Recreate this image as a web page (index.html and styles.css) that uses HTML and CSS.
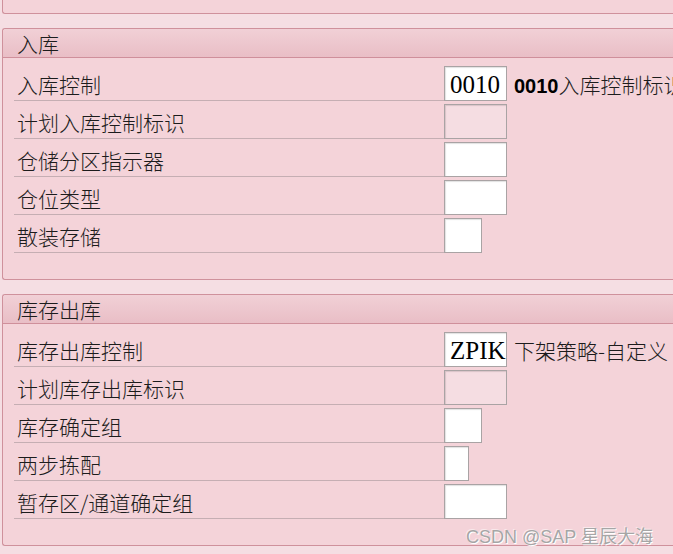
FILE: index.html
```html
<!DOCTYPE html>
<html lang="zh">
<head>
<meta charset="utf-8">
<title>入库 / 库存出库</title>
<link rel="stylesheet" href="styles.css">
</head>
<body>
<div class="page">
  <div class="panel panel-top"></div>

  <section class="panel">
    <div class="panel-head">入库</div>
    <div class="panel-body">
      <div class="row">
        <div class="label">入库控制</div>
        <div class="field w63"><span class="val">0010</span></div>
        <div class="desc"><b>0010</b>入库控制标识</div>
      </div>
      <div class="row">
        <div class="label">计划入库控制标识</div>
        <div class="field w63 disabled"></div>
      </div>
      <div class="row">
        <div class="label">仓储分区指示器</div>
        <div class="field w63"></div>
      </div>
      <div class="row">
        <div class="label">仓位类型</div>
        <div class="field w63"></div>
      </div>
      <div class="row">
        <div class="label">散装存储</div>
        <div class="field w38"></div>
      </div>
    </div>
  </section>

  <section class="panel">
    <div class="panel-head">库存出库</div>
    <div class="panel-body">
      <div class="row">
        <div class="label">库存出库控制</div>
        <div class="field w63"><span class="val">ZPIK</span></div>
        <div class="desc">下架策略-自定义</div>
      </div>
      <div class="row">
        <div class="label">计划库存出库标识</div>
        <div class="field w63 disabled"></div>
      </div>
      <div class="row">
        <div class="label">库存确定组</div>
        <div class="field w38"></div>
      </div>
      <div class="row">
        <div class="label">两步拣配</div>
        <div class="field w25"></div>
      </div>
      <div class="row">
        <div class="label">暂存区/通道确定组</div>
        <div class="field w63"></div>
      </div>
    </div>
  </section>
</div>
<div class="watermark">CSDN @SAP 星辰大海</div>
</body>
</html>
```
FILE: styles.css
```css
html, body {
  margin: 0;
  padding: 0;
}
body {
  width: 673px;
  height: 554px;
  overflow: hidden;
  position: relative;
  background: #f5dee3;
  font-family: "Noto Sans CJK SC", "Noto Sans", sans-serif;
  font-weight: 300;
  color: #1c1c1c;
}
.page {
  display: flex;
  flex-direction: column;
  gap: 14px;
  padding-left: 2px;
}
.panel {
  width: 720px;
  background: #f4d3d9;
  border: 1px solid #cf919c;
  border-right: none;
  border-radius: 3px 0 0 3px;
}
.panel-top {
  height: 13px;
  border-top: none;
  border-radius: 0 0 0 3px;
}
.panel-head {
  height: 28px;
  line-height: 28px;
  padding-left: 14px;
  font-size: 21px;
  background: linear-gradient(#f1d0d6, #e9bec6);
  border-bottom: 1px solid #cf8f9b;
  border-radius: 3px 0 0 0;
}
.panel-body {
  padding: 5px 0 26px 11px;
  display: flex;
  flex-direction: column;
}
.row {
  display: flex;
  align-items: flex-end;
  height: 38px;
}
.label {
  width: 427px;
  height: 37px;
  padding-left: 3px;
  border-bottom: 1px solid #c5aeb3;
  font-size: 21px;
  line-height: 42px;
  white-space: nowrap;
}
.field {
  height: 33px;
  background: #fff;
  border: 1px solid #a9a3a4;
  box-shadow: inset 1px 1px 1px rgba(0,0,0,0.12);
  box-sizing: content-box;
  display: flex;
  align-items: center;
}
.field.disabled {
  background: #f5dde2;
}
.w63 { width: 61px; }
.w38 { width: 36px; }
.w25 { width: 23px; }
.val {
  font-family: "Liberation Serif", serif;
  font-size: 25px;
  font-weight: normal;
  color: #000;
  padding-left: 5px;
  padding-top: 2px;
}
.desc {
  align-self: center;
  margin-left: 7px;
  margin-top: 4px;
  font-size: 21px;
  white-space: nowrap;
}
.desc b {
  font-family: "Liberation Sans", sans-serif;
  font-size: 20px;
  font-weight: bold;
  color: #000;
}
.watermark {
  position: absolute;
  left: 466px;
  top: 522px;
  font-family: "Liberation Sans", "Noto Sans CJK SC", sans-serif;
  font-weight: normal;
  font-size: 18px;
  color: #a6a6a6;
  text-shadow: 1px 1px 0 #fff, -1px -1px 0 rgba(255,255,255,0.5);
  white-space: nowrap;
}
```
